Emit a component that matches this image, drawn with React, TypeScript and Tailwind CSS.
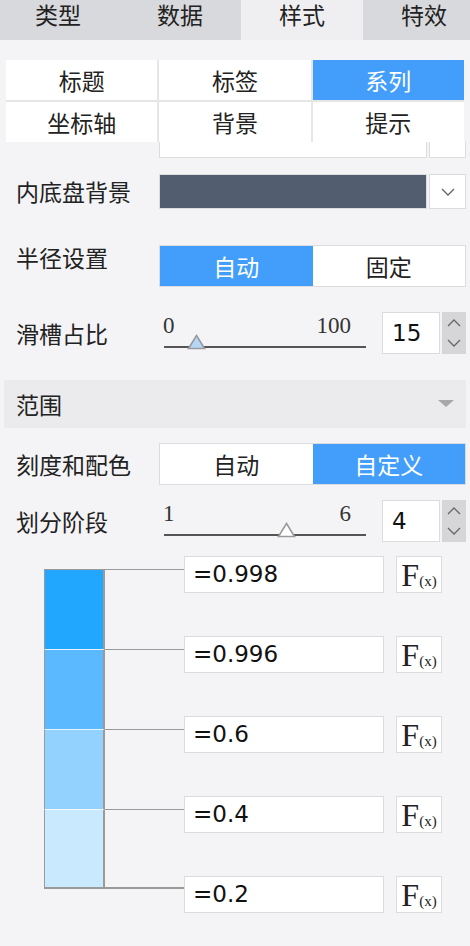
import React from "react";

const cjk = "font-['Noto_Sans_CJK_SC','Noto_Sans',sans-serif]";

const tabs = [
  { label: "类型", cls: "w-[119px] justify-center pr-[3px]" },
  { label: "数据", cls: "w-[122px] justify-center" },
  { label: "样式", cls: "w-[122px] justify-center bg-[#efeff1]" },
  { label: "特效", cls: "flex-1 justify-start pl-[38px]" },
];
const subTabs = ["标题", "标签", "系列", "坐标轴", "背景", "提示"];

const segments = [
  { bg: "bg-[#22a7ff]", top: "border-t-[#9a9a9a]" },
  { bg: "bg-[#5bbaff]", top: "border-t-[#e8f4ff]" },
  { bg: "bg-[#93d2ff]", top: "border-t-[#e8f4ff]" },
  { bg: "bg-[#c9e9ff]", top: "border-t-[#f2f9ff]" },
];

const values = ["=0.998", "=0.996", "=0.6", "=0.4", "=0.2"];

const Chevron = ({ up }: { up?: boolean }) => (
  <svg width="14" height="8" viewBox="0 0 14 8">
    <polyline
      points={up ? "1,7 7,1 13,7" : "1,1 7,7 13,1"}
      fill="none"
      stroke="#666"
      strokeWidth="1.3"
    />
  </svg>
);

const Spinner = ({ value }: { value: string }) => (
  <div className="flex h-[42px] items-stretch">
    <div className="flex w-[58px] items-center border border-[#dcdcde] bg-white pl-[9px] font-['DejaVu_Sans',sans-serif] text-[23px] text-[#111]">
      {value}
    </div>
    <div className="ml-[2px] flex w-[24px] flex-col items-center justify-center gap-[12px] bg-[#d6d6d9]">
      <Chevron up />
      <Chevron />
    </div>
  </div>
);

const Slider = ({
  min,
  max,
  thumb,
  fill,
}: {
  min: string;
  max: string;
  thumb: number;
  fill: string;
}) => (
  <div className="relative h-[42px] w-[208px] font-['Liberation_Serif',serif] text-[23px] leading-none text-[#333]">
    <div className="flex justify-between pl-[4px] pr-[16px] pt-[2px]">
      <span>{min}</span>
      <span>{max}</span>
    </div>
    <div className="ml-[5px] mt-[9px] h-[2px] w-[202px] bg-[#555]" />
    <svg
      className="absolute top-[22px]"
      style={{ left: thumb - 9 }}
      width="19"
      height="16"
      viewBox="0 0 19 16"
    >
      <polygon points="9.5,1.5 17.5,14.5 1.5,14.5" fill={fill} stroke="#9a9a9a" strokeWidth="1.6" />
    </svg>
  </div>
);

const Segmented = ({ options, active }: { options: string[]; active: number }) => (
  <div className="flex h-[42px] w-[307px] border border-[#dcdcde] bg-white">
    {options.map((o, i) => (
      <div
        key={o}
        className={`flex flex-1 items-center justify-center text-[23px] ${
          i === active ? "bg-[#429efa] text-white" : "text-[#222]"
        }`}
      >
        {o}
      </div>
    ))}
  </div>
);

export default function App() {
  return (
    <div className={`h-[946px] w-[470px] overflow-hidden bg-[#f4f4f6] text-[#222] ${cjk}`}>
      {/* top tabs */}
      <div className="flex h-[40px] bg-[#d8d9dc]">
        {tabs.map((t) => (
          <div key={t.label} className={`flex text-[23px] leading-[28px] ${t.cls}`}>
            {t.label}
          </div>
        ))}
      </div>

      {/* sub tabs */}
      <div className="mx-[6px] mt-[20px] grid grid-cols-3 gap-[2px] bg-[#e6e6e8]">
        {subTabs.map((t) => (
          <div
            key={t}
            className={`flex h-[40px] items-center justify-center text-[23px] ${
              t === "系列" ? "bg-[#429efa] text-white" : "bg-white"
            }`}
          >
            {t}
          </div>
        ))}
      </div>

      {/* partially scrolled row */}
      <div className="flex h-[16px] items-end pl-[159px] pr-[4px]">
        <div className="flex h-[16px] flex-1 gap-[2px]">
          <div className="w-[268px] border border-t-0 border-[#dcdcde] bg-white" />
          <div className="flex-1 border border-t-0 border-[#dcdcde] bg-white" />
        </div>
      </div>

      {/* 内底盘背景 */}
      <div className="mt-[16px] flex h-[35px] items-center">
        <div className="w-[159px] pl-[16px] text-[23px]">内底盘背景</div>
        <div className="flex h-[35px] flex-1 gap-[2px] pr-[4px]">
          <div className="w-[268px] border border-[#dcdcde] bg-[#525e70]" />
          <div className="flex flex-1 items-center justify-center border border-[#dcdcde] bg-white">
            <Chevron />
          </div>
        </div>
      </div>

      {/* 半径设置 */}
      <div className="mt-[36px] flex">
        <div className="w-[159px] pl-[16px] text-[23px] leading-[24px]">半径设置</div>
        <Segmented options={["自动", "固定"]} active={0} />
      </div>

      {/* 滑槽占比 */}
      <div className="mt-[25px] flex items-center">
        <div className="w-[159px] pl-[16px] text-[23px]">滑槽占比</div>
        <Slider min="0" max="100" thumb={37} fill="#b6d6f7" />
        <div className="ml-[15px]">
          <Spinner value="15" />
        </div>
      </div>

      {/* 范围 header */}
      <div className="mx-[4px] mt-[26px] flex h-[48px] items-center justify-between bg-[#ebebed] pl-[12px] pr-[12px] text-[23px]">
        <span>范围</span>
        <svg width="16" height="8" viewBox="0 0 16 8">
          <polygon points="0,0 16,0 8,7" fill="#a8a8aa" />
        </svg>
      </div>

      {/* 刻度和配色 */}
      <div className="mt-[15px] flex items-center">
        <div className="w-[159px] pl-[16px] text-[23px]">刻度和配色</div>
        <Segmented options={["自动", "自定义"]} active={1} />
      </div>

      {/* 划分阶段 */}
      <div className="mt-[15px] flex items-center">
        <div className="w-[159px] pl-[16px] text-[23px]">划分阶段</div>
        <Slider min="1" max="6" thumb={127} fill="#ffffff" />
        <div className="ml-[15px]">
          <Spinner value="4" />
        </div>
      </div>

      {/* color scale */}
      <div className="mt-[14px] flex pl-[44px]">
        <div className="mt-[13px] flex h-[320px] w-[140px] flex-col border-b-2 border-[#9a9a9a]">
          {segments.map((s, i) => (
            <div key={i} className={`flex ${i === 3 ? "h-[78px]" : "h-[80px]"}`}>
              <div className={`w-[61px] border-l border-r-2 border-t border-[#9a9a9a] ${s.top} ${s.bg}`} />
              <div className="flex-1 border-t border-[#9a9a9a]" />
            </div>
          ))}
        </div>
        <div className="flex flex-col gap-[43px]">
          {values.map((v) => (
            <div key={v} className="flex h-[37px] gap-[12px]">
              <div className="flex w-[200px] items-center border border-[#dcdcde] bg-white pl-[8px] font-['DejaVu_Sans',sans-serif] text-[23px] text-[#111]">
                {v}
              </div>
              <div className="flex w-[46px] items-baseline justify-center border border-[#dcdcde] bg-white pt-[2px] font-['Liberation_Serif',serif] text-[#222]">
                <span className="text-[32px] leading-[32px]">F</span>
                <span className="text-[15px] leading-none">(x)</span>
              </div>
            </div>
          ))}
        </div>
      </div>
    </div>
  );
}
